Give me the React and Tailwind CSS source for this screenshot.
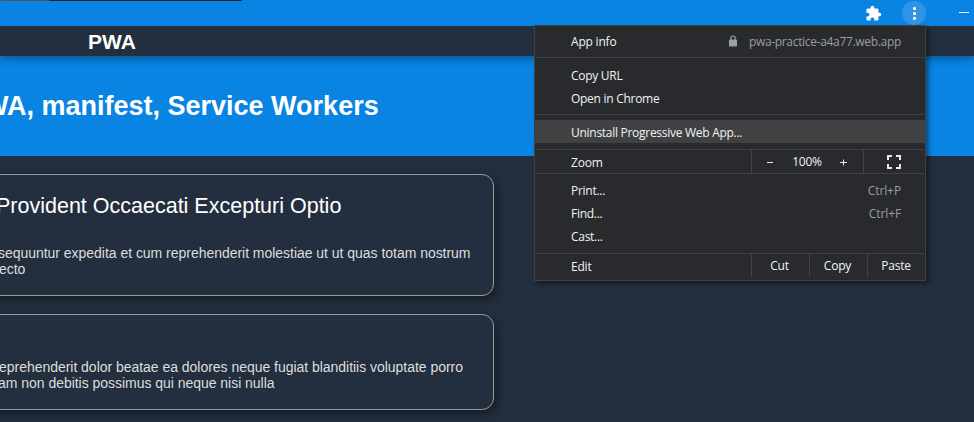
const menuFont = "font-['Open_Sans','Noto_Sans',sans-serif]";

function Item({ label, right, active }) {
  return (
    <div className={`flex h-[23px] items-center justify-between pl-9 pr-6 ${active ? 'bg-[#404142] pt-[2px]' : ''}`}>
      <span className="tracking-[-0.28px]">{label}</span>
      {right && <span className="tracking-[-0.1px] text-[#9a9da1]">{right}</span>}
    </div>
  );
}

function Separator() {
  return <div className="mx-px h-px bg-[#404145]" />;
}

function AppMenu() {
  return (
    <div className={`absolute left-[534px] top-[25px] z-30 h-[256px] w-[392px] border border-[#404145] bg-[#292a2d] text-[12px] leading-4 tracking-[-0.2px] whitespace-nowrap text-[#f1f3f4] shadow-[3px_3px_4px_rgba(0,0,0,0.4)] ${menuFont}`}>
      <div className="flex h-[31px] items-center pl-9 pr-6">
        <span>App info</span>
        <svg className="ml-auto mr-[12px] -mt-[2px]" width="8" height="12" viewBox="0 0 8 12">
          <path d="M1.8 5V3.2a2.2 2.2 0 0 1 4.4 0V5" fill="none" stroke="#9aa0a6" strokeWidth="1.2" />
          <rect y="4.6" width="8" height="6.9" rx="0.8" fill="#9aa0a6" />
        </svg>
        <span className="tracking-[-0.32px] text-[#9a9da1]">pwa-practice-a4a77.web.app</span>
      </div>
      <Separator />
      <div className="pt-[6px] pb-1">
        <Item label="Copy URL" />
        <Item label="Open in Chrome" />
      </div>
      <Separator />
      <div className="pt-[5px] pb-[6px]">
        <Item label="Uninstall Progressive Web App..." active />
      </div>
      <Separator />
      <div className="flex h-[23px] pr-px">
        <div className="flex flex-1 items-center pt-[3px] pl-9">Zoom</div>
        <div className="flex w-[112px] items-center border-l border-[#404145]">
          <svg className="mt-px ml-[15px]" width="7" height="7" viewBox="0 0 7 7"><path d="M0 3.5h6" stroke="#e8eaed" /></svg>
          <span className="flex-1 text-center">100%</span>
          <svg className="mt-px mr-[16px]" width="7" height="7" viewBox="0 0 7 7"><path d="M0 3.5h7M3.5 0.5v6" stroke="#e8eaed" /></svg>
        </div>
        <div className="flex w-[61px] items-center justify-center border-l border-[#404145]">
          <svg width="14" height="14" viewBox="0 0 14 14" fill="none" stroke="#e8eaed" strokeWidth="2">
            <path d="M1 5V1h4M9 1h4v4M13 9v4H9M5 13H1V9" />
          </svg>
        </div>
      </div>
      <Separator />
      <div className="py-[5px]">
        <Item label="Print..." right="Ctrl+P" />
        <Item label="Find..." right="Ctrl+F" />
        <Item label="Cast..." />
      </div>
      <Separator />
      <div className="flex h-[23px]">
        <div className="flex flex-1 items-center pt-[3px] pl-9">Edit</div>
        <div className="flex w-[58px] items-center justify-center border-l border-[#404145] pr-[2px]">Cut</div>
        <div className="flex w-[58px] items-center justify-center border-l border-[#404145] pr-[2px]">Copy</div>
        <div className="flex w-[58px] items-center justify-center border-l border-[#404145] pr-px">Paste</div>
      </div>
    </div>
  );
}

function Card({ className, title, lines }) {
  return (
    <article className={`-ml-[40px] w-[534px] rounded-[12px] border border-[#999] pl-[30px] shadow-[3px_4px_10px_rgba(0,0,0,0.4)] ${className}`}>
      {title && <h2 className="mb-[26px] ml-[5px] text-[21.5px] leading-[26px] text-white">{title}</h2>}
      {lines.map((l) => (
        <p key={l.text} className={`text-[14px] leading-4 tracking-[-0.03px] text-[#ddd] ${l.pos}`}>{l.text}</p>
      ))}
    </article>
  );
}

export default function App() {
  return (
    <div className="relative flex h-[422px] w-[974px] flex-col overflow-hidden bg-[#232f3e] whitespace-nowrap font-['Liberation_Sans',Arial,sans-serif]">
      <header className="z-20 flex h-[26px] shrink-0 items-start bg-[#0984e3]">
        <div className="ml-px h-px w-[48px] bg-[#555]" />
        <div className="h-px w-[193px] bg-[#222]" />
        <svg className="mt-[5px] ml-[623px]" width="17" height="17" viewBox="0 0 24 24" fill="#fff">
          <path d="M20.5 11H19V7c0-1.100-.9-2-2-2h-4V3.500a2.500 2.500 0 0 0-5 0V5H4c-1.100 0-2 .9-2 2v3.800h1.500a2.700 2.700 0 0 1 0 5.400H2V20c0 1.100.9 2 2 2h3.800v-1.500a2.700 2.700 0 0 1 5.400 0V22H17c1.100 0 2-.9 2-2v-4h1.500a2.500 2.500 0 0 0 0-5z" />
        </svg>
        <div className="mt-px ml-[20px] flex size-6 items-center justify-center rounded-full bg-[#2e95e6]">
          <svg width="4" height="14" viewBox="0 0 4 14" fill="#fff">
            <circle cx="2.500" cy="2.500" r="1.600" /><circle cx="2.500" cy="7.500" r="1.600" /><circle cx="2.500" cy="12.400" r="1.600" />
          </svg>
        </div>
        <div className="mt-[12px] ml-[33px] h-px w-[10px] bg-white" />
      </header>
      <nav className="z-10 h-[30px] shrink-0 bg-[#232f3e] pl-[88px] text-[21px] leading-[31px] font-bold text-white shadow-[0_2px_10px_rgba(0,0,0,0.4)]">PWA</nav>
      <section className="h-[100px] shrink-0 bg-[#0984e3] pt-[34px]">
        <h1 className="-ml-[17px] text-[27px] leading-8 font-bold text-white">WA, manifest, Service Workers</h1>
      </section>
      <main className="flex flex-col gap-[18px] pt-[18px]">
        <Card
          className="h-[122px] pt-[18px]"
          title="Provident Occaecati Excepturi Optio"
          lines={[
            { text: 'sequuntur expedita et cum reprehenderit molestiae ut ut quas totam nostrum', pos: 'ml-[7px]' },
            { text: 'ecto', pos: 'ml-[8px]' },
          ]}
        />
        <Card
          className="h-[96px] pt-[44px]"
          lines={[
            { text: 'eprehenderit dolor beatae ea dolores neque fugiat blanditiis voluptate porro', pos: 'ml-[8px]' },
            { text: 'am non debitis possimus qui neque nisi nulla', pos: 'ml-[7px]' },
          ]}
        />
      </main>
      <AppMenu />
    </div>
  );
}
